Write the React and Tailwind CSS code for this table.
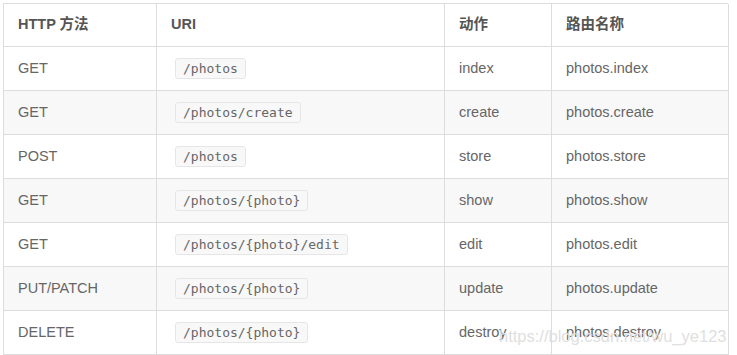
const HEAD = ['HTTP 方法', 'URI', '动作', '路由名称']

const ROWS = [
  ['GET', '/photos', 'index', 'photos.index'],
  ['GET', '/photos/create', 'create', 'photos.create'],
  ['POST', '/photos', 'store', 'photos.store'],
  ['GET', '/photos/{photo}', 'show', 'photos.show'],
  ['GET', '/photos/{photo}/edit', 'edit', 'photos.edit'],
  ['PUT/PATCH', '/photos/{photo}', 'update', 'photos.update'],
  ['DELETE', '/photos/{photo}', 'destroy', 'photos.destroy'],
]

const COLS = 'grid grid-cols-[153px_288px_107px_177px]'
const CELL = 'flex items-center px-[14px] border-r border-b border-[#dddddd]'

export default function App() {
  return (
    <div className="relative w-[737px] h-[355px] bg-white pl-[3px] pt-[3px]" style={{ fontFamily: '"Liberation Sans", Arial, "Noto Sans CJK SC", sans-serif' }}>
      <div className="w-[725px] border-l border-t border-[#dddddd]">
        <div className={COLS}>
          {HEAD.map(h => (
            <div key={h} className={`${CELL} h-[43px] text-[14.5px] font-bold text-[#555555]`}>{h}</div>
          ))}
        </div>
        {ROWS.map((r, i) => (
          <div key={i} className={`${COLS} ${i % 2 ? 'bg-[#f8f8f8]' : 'bg-white'} text-[14.5px] text-[#666666]`}>
            <div className={`${CELL} h-[44px]`}>{r[0]}</div>
            <div className={`${CELL} h-[44px]`}>
              <code className="ml-[4px] h-[21px] flex items-center px-[7px] rounded-[3px] border border-[#e6e6e6] bg-[#f8f8f8] text-[13px] text-[#666666]" style={{ fontFamily: '"DejaVu Sans Mono", monospace' }}>
                {r[1]}
              </code>
            </div>
            <div className={`${CELL} h-[44px]`}>{r[2]}</div>
            <div className={`${CELL} h-[44px]`}>{r[3]}</div>
          </div>
        ))}
      </div>
      {/* watermark */}
      <div className="absolute left-[499px] top-[328px] leading-none text-[16.5px] text-[#e0e0e0] pointer-events-none whitespace-nowrap">
        https://blog.csdn.net/wu_ye123
      </div>
    </div>
  )
}
